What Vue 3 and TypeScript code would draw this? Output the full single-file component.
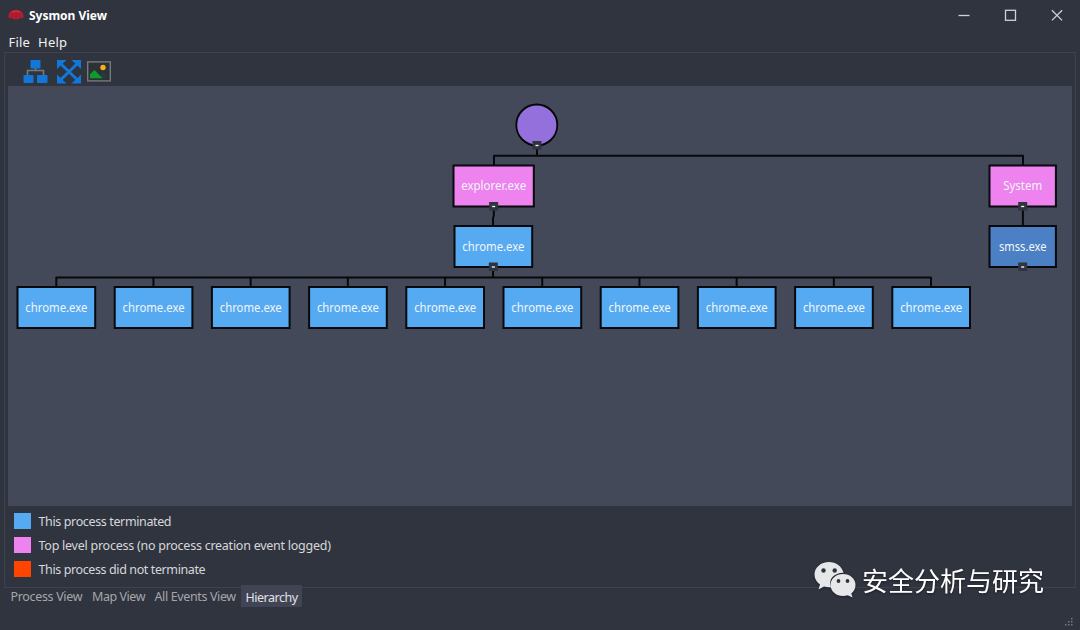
<script setup lang="ts">
interface ProcessNode {
  label: string
  x: number
  y: number
  w: number
  textWidth: number
  kind: 'top' | 'ended' | 'selected'
  toggle?: boolean
}

const children: ProcessNode[] = Array.from({ length: 10 }, (_, i) => ({
  label: 'chrome.exe',
  x: 17.5 + i * 97.2,
  y: 287,
  w: 77.7,
  textWidth: 62,
  kind: 'ended',
}))

const nodes: ProcessNode[] = [
  { label: 'explorer.exe', x: 453.5, y: 165.5, w: 80.3, textWidth: 65, kind: 'top', toggle: true },
  { label: 'System', x: 989.5, y: 165.5, w: 66.4, textWidth: 39, kind: 'top', toggle: true },
  { label: 'chrome.exe', x: 454.5, y: 226, w: 77.7, textWidth: 62, kind: 'ended', toggle: true },
  { label: 'smss.exe', x: 989.5, y: 226, w: 66.4, textWidth: 47.5, kind: 'selected', toggle: true },
  ...children,
]

const legend = [
  { kind: 'ended', text: 'This process terminated', cls: 'l1' },
  { kind: 'top', text: 'Top level process (no process creation event logged)', cls: 'l2' },
  { kind: 'running', text: 'This process did not terminate', cls: 'l3' },
]

const tabs = [
  { text: 'Process View', cls: 't1' },
  { text: 'Map View', cls: 't2' },
  { text: 'All Events View', cls: 't3' },
  { text: 'Hierarchy', cls: 't4 active' },
]
</script>

<template>
  <div class="window">
    <header class="titlebar">
      <svg class="logo" width="16" height="12" viewBox="0 0 16 12">
        <path d="M.5 7.500C.5 3 4 .8 8 .8s7.500 2.200 7.500 6.700L14.500 9.500 12 9 10.500 10.300h-5L4 9 1.500 9.500Z" fill="#b81c30" />
        <path d="M3.500 8.500 5.500 5M8 9V4.500M12.500 8.500 10.500 5" stroke="#84202d" stroke-width=".9" fill="none" />
        <path d="M4 3q4-2 8 0" stroke="#c83844" fill="none" />
      </svg>
      <span class="title">Sysmon View</span>
      <svg class="controls" width="106" height="14" viewBox="0 0 106 14" fill="none" stroke="#d0d1d4" stroke-width="1.300">
        <path d="M.5 7.500h11" />
        <rect x="47.500" y="2.300" width="10" height="10" />
        <path d="m93.900 2.200 10.200 10.200M104.100 2.200 93.900 12.400" />
      </svg>
    </header>
    <nav class="menu"><span class="file">File</span><span class="help">Help</span></nav>

    <main class="panel">
      <div class="toolbar">
        <svg width="25" height="24" viewBox="0 0 25 24">
          <path d="M12.500 8v3M4.500 16v-5.500h16V16" fill="none" stroke="#77797d" stroke-width="1.600" />
          <g fill="#1177d8"><rect x="7.500" y="0" width="10" height="8.500" rx=".8" /><rect x=".5" y="15" width="10" height="8" rx=".8" /><rect x="14" y="15" width="10.500" height="8" rx=".8" /></g>
        </svg>
        <svg width="24" height="24" viewBox="0 0 24 24">
          <path d="m4 4 16 15.500M20 4 4 19.500" stroke="#1177d8" stroke-width="3" />
          <path d="M0 0h9.500L0 9ZM24 0v9L14.500 0ZM0 23.500V14.500l9.500 9ZM24 23.500h-9.500L24 14.500Z" fill="#1177d8" />
        </svg>
        <svg width="24" height="21" viewBox="0 0 24 21">
          <rect x=".7" y=".9" width="22.600" height="19" fill="#2d3036" stroke="#77797d" stroke-width="1.400" />
          <path d="m12.500 15 4-3.500 4.500 5.500h-7Z" fill="#1e4038" />
          <path d="M3 17.200v-4L7.500 9l8 8.200Z" fill="#0d9b2c" />
          <circle cx="16" cy="6.500" r="2.700" fill="#fbae17" />
        </svg>
      </div>

      <svg class="canvas" width="1064" height="420" viewBox="8 86 1064 420">
        <g class="links">
          <path d="M537 146v9.800M494 165v-9.200h529V165M493.800 207v9l-.8 2v8M1022.900 207v19M493 268v9.500" />
          <path d="M56.300 287v-9.500h874.700v9.500" />
          <path v-for="(n, i) in children.slice(1, 9)" :key="i" :d="`M${n.x + 38.75} 277.500v9.500`" />
        </g>
        <circle class="root" cx="536.800" cy="125" r="20.500" />
        <g v-for="(n, i) in nodes" :key="i">
          <rect class="node" :class="n.kind" :x="n.x" :y="n.y" :width="n.w" height="41" />
          <text :x="n.x + n.w / 2" :y="n.y + 24.600" text-anchor="middle" :textLength="n.textWidth" lengthAdjust="spacingAndGlyphs">{{ n.label }}</text>
          <g v-if="n.toggle">
            <rect class="toggle" :x="n.x + n.w / 2 - 4.500" :y="n.y + 36.500" width="9" height="8.500" />
            <path class="dash" :d="`M${n.x + n.w / 2 - 1.500} ${n.y + 41}h3`" />
          </g>
        </g>
        <rect class="toggle" x="532.500" y="141" width="9" height="8.500" />
        <path class="dash" d="M535.500 145.500h3" />
      </svg>

      <ul class="legend">
        <li v-for="l in legend" :key="l.kind"><i :class="l.kind"></i><span :class="l.cls">{{ l.text }}</span></li>
      </ul>
    </main>

    <footer class="tabs">
      <span v-for="t in tabs" :key="t.text" class="tab" :class="t.cls">{{ t.text }}</span>
    </footer>

    <svg class="grip" width="8" height="8" viewBox="0 0 8 8" fill="#777981">
      <path d="M6 0h1.500v1.500H6ZM3 3h1.500v1.500H3ZM6 3h1.500v1.500H6ZM0 6h1.500v1.500H0ZM3 6h1.500v1.500H3ZM6 6h1.500v1.500H6Z" />
    </svg>

    <div class="watermark">
      <svg width="42" height="38" viewBox="0 0 42 38">
        <path d="M15 1C7 1 .5 6.500.5 13.500c0 4 2 7.500 5.500 10L4.500 28.500 10 25.500c2 .6 4.500 1 7 .7C14 18 20 12 29.500 11.800 28 5.500 22 1 15 1Z" fill="#e6e7e9" />
        <path d="M29 13c-7 0-12.500 4.800-12.500 11S22 35 29 35c1.700 0 3.300-.3 4.800-.8L38.500 36.500 37.300 32.500C40 30.500 41.500 27.500 41.500 24 41.500 17.800 36 13 29 13Z" fill="#e6e7e9" />
        <g fill="#30343f"><circle cx="9.500" cy="9.500" r="2.200" /><circle cx="20.700" cy="9.500" r="2.200" /><circle cx="24.500" cy="20" r="1.900" /><circle cx="33.500" cy="20" r="1.900" /></g>
      </svg>
      <span>安全分析与研究</span>
    </div>
  </div>
</template>

<style>
body { margin: 0; background: #30343f; }
</style>

<style scoped>
.window { position: relative; display: flex; flex-direction: column; box-sizing: border-box; width: 1080px; height: 630px; overflow: hidden; background: #30343f; color: #d6d7da; font: 12.5px/16px "Noto Sans", sans-serif; white-space: nowrap; }
.titlebar { display: flex; align-items: center; height: 30px; padding: 0 16px 0 8px; box-sizing: border-box; color: #fff; }
.title { margin: 1px 0 0 5px; font-size: 12px; font-weight: 700; letter-spacing: -0.02px; }
.controls { margin-left: auto; }
.menu { display: flex; gap: 8px; height: 22px; padding: 4px 0 0 8.500px; box-sizing: border-box; color: #f1f1f2; font-size: 13px; letter-spacing: 0.2px; }
.panel { display: flex; flex-direction: column; box-sizing: border-box; height: 536px; margin: 0 4px; padding: 0 3px; border: 1px solid #3d4150; }
.toolbar { display: flex; flex: none; height: 33px; padding: 7px 0 0 15px; box-sizing: border-box; }
.toolbar svg:nth-child(2) { margin-left: 9px; }
.toolbar svg:nth-child(3) { margin: 1px 0 0 6px; }
.canvas { display: block; flex: none; background: #434958; }
.links { fill: none; stroke: #08090b; stroke-width: 2; stroke-linejoin: round; }
.root { fill: #9370db; stroke: #060608; stroke-width: 1.800; }
.node { stroke: #07090d; stroke-width: 2; }
rect.top { fill: #ee82ee; }
rect.ended { fill: #55aaf2; }
rect.selected { fill: #4c80c4; }
.canvas text { fill: #f2f5fa; font: 12px "Noto Sans", sans-serif; }
.toggle { fill: #30343f; }
.dash { stroke: #fff; stroke-width: 1.300; }
.legend { display: flex; flex-direction: column; gap: 7.500px; margin: 0; padding: 6.500px 0 0 6px; list-style: none; }
.legend li { display: flex; height: 16.500px; }
.legend i { width: 17px; height: 16.500px; margin-right: 7.500px; }
.legend span { padding-top: 1.500px; }
.l1 { letter-spacing: -0.37px; }
.l2 { letter-spacing: -0.25px; }
.l3 { letter-spacing: -0.39px; }
.legend i.ended { background: #55aaf2; }
.legend i.top { background: #ee82ee; }
.legend i.running { background: #ff4500; }
.tabs { display: flex; height: 22px; margin-top: -3px; padding-left: 10.500px; color: #a5a6aa; z-index: 1; }
.tab { box-sizing: border-box; padding: 4px 0 0; }
.t1 { width: 81.500px; letter-spacing: -0.33px; }
.t2 { width: 62.500px; letter-spacing: -0.45px; }
.t3 { width: 86.500px; letter-spacing: -0.37px; }
.t4 { width: 61px; letter-spacing: -0.48px; padding-left: 4.500px; }
.tab.active { background: #414455; color: #e2e2e5; padding-top: 5px; }
.grip { position: absolute; left: 1065px; top: 618px; }
.watermark { position: absolute; left: 814px; top: 561px; display: flex; z-index: 2; color: #fff; font: 26px/38px "Noto Sans CJK SC", sans-serif; }
.watermark svg, .watermark span { filter: drop-shadow(0 1px 1px #1a1c22); }
.watermark span { margin-left: 6px; }
</style>
